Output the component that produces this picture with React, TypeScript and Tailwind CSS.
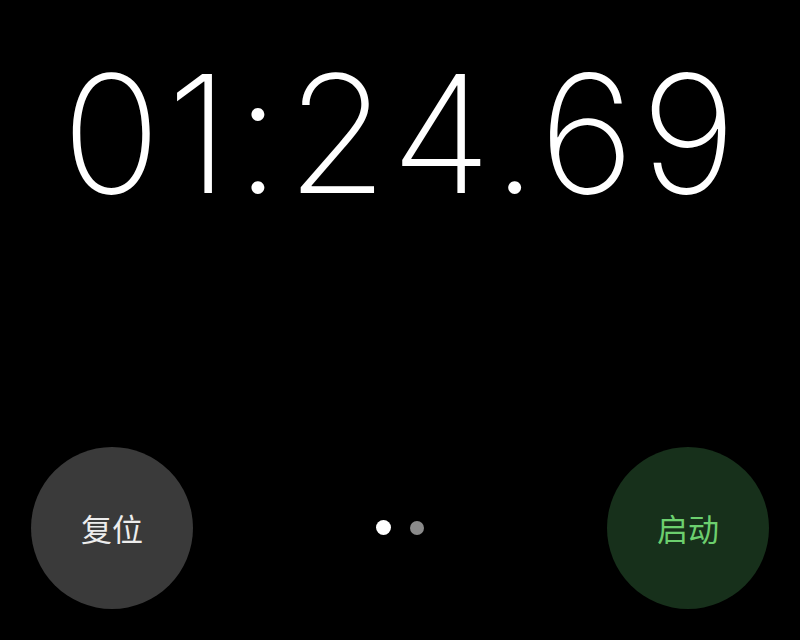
export default function App() {
  return (
    <div className="flex h-[640px] w-[800px] flex-col bg-black font-['Inter','Noto_Sans_CJK_SC',sans-serif] text-white">
      <div className="flex h-[272px] items-start justify-center pt-[52px] pl-[4px]">
        <span className="text-[164px] font-[150] leading-none tracking-[6px]">01:24.69</span>
      </div>
      <div className="flex flex-1 items-start justify-between px-[31px] pt-[175px]">
        <button className="flex size-[162px] items-center justify-center rounded-full bg-[#3a3a3a] text-[31px] text-[#ededed] font-['Noto_Sans_CJK_SC',sans-serif]">
          复位
        </button>
        <div className="flex items-center gap-[19px] pt-[73px]">
          <div className="size-[15px] rounded-full bg-white" />
          <div className="size-[14px] rounded-full bg-[#8a8a8a]" />
        </div>
        <button className="flex size-[162px] items-center justify-center rounded-full bg-[#17301b] text-[31px] text-[#6ccf6e] font-['Noto_Sans_CJK_SC',sans-serif]">
          启动
        </button>
      </div>
    </div>
  );
}
